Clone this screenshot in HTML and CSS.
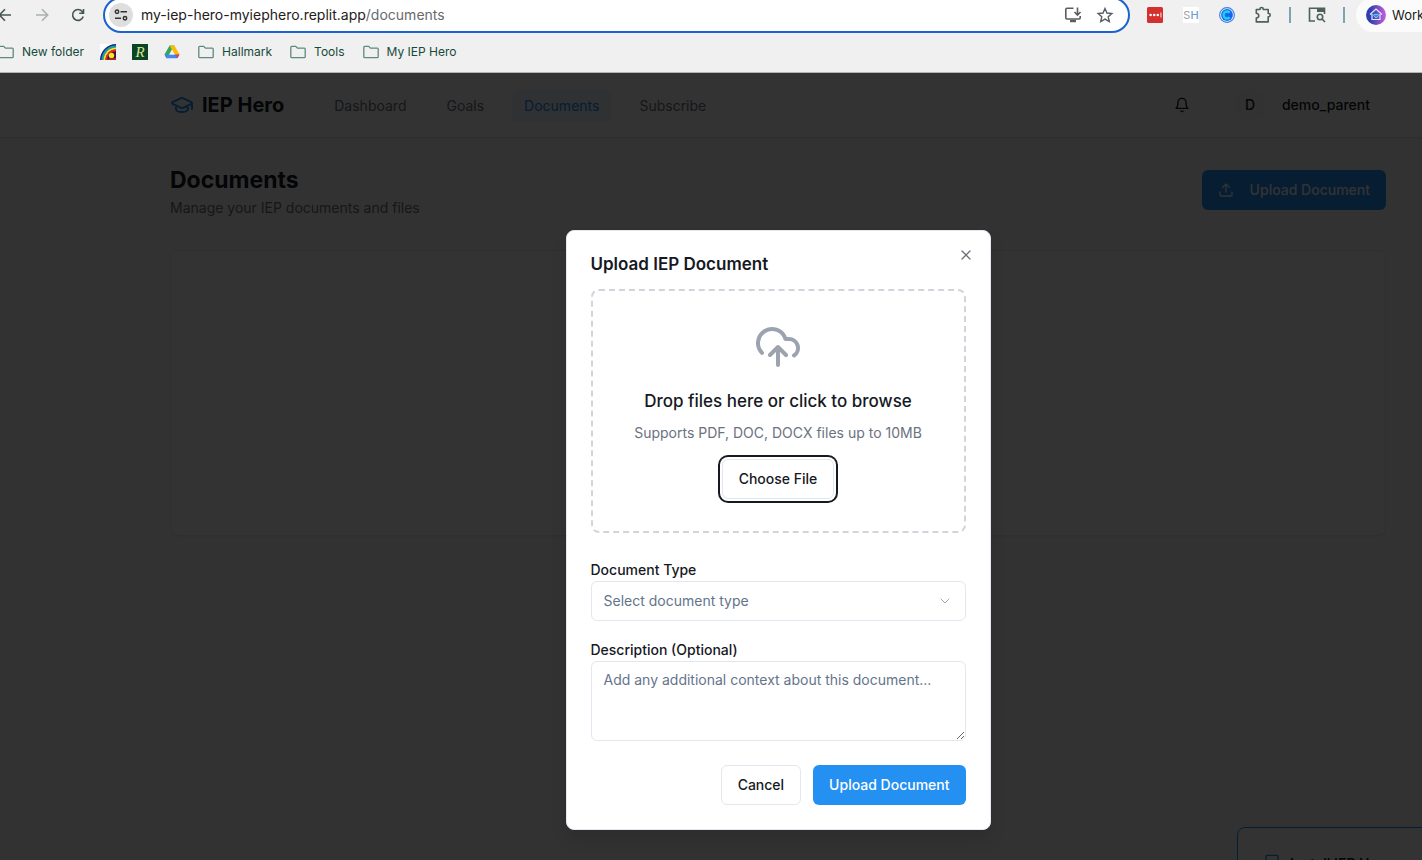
FILE: index.html
```
<!DOCTYPE html>
<html lang="en">
<head>
<meta charset="utf-8">
<meta name="viewport" content="width=device-width, initial-scale=1">
<title>IEP Hero - Documents</title>
<link rel="stylesheet" href="styles.css">
</head>
<body>
<svg class="symbols" aria-hidden="true">
  <symbol id="folder" viewBox="0 0 16 16"><path d="M.8 3.2q0-.9.9-.9h4l1.8 1.9h6.8q.9 0 .9.9v7.7q0 .9-.9.9H1.700q-.9 0-.9-.9z" fill="none" stroke="#5d8b78" stroke-width="1.3"/></symbol>
</svg>

<header class="browser">
  <div class="toolbar">
    <div class="tools tools-left">
      <button class="tool" aria-label="Back"><svg width="16" height="16" viewBox="0 0 16 16" fill="none" stroke="#47574f" stroke-width="1.6"><path d="M14 8H2.500M8 2.300L2.300 8 8 13.700"/></svg></button>
      <button class="tool" aria-label="Forward"><svg width="16" height="16" viewBox="0 0 16 16" fill="none" stroke="#aab1ae" stroke-width="1.6"><path d="M2 8h11.500M8 2.300L13.700 8 8 13.700"/></svg></button>
      <button class="tool" aria-label="Reload"><svg width="16" height="16" viewBox="0 0 16 16" fill="none" stroke="#47574f" stroke-width="1.6"><path d="M13.200 9.500A5.400 5.400 0 1 1 12.200 4.500L13.400 6M13.500 2v4.300H9.200"/></svg></button>
    </div>
    <div class="omnibox">
      <button class="site-info" aria-label="Site information"><svg width="16" height="16" viewBox="0 0 16 16" fill="none" stroke="#303233" stroke-width="1.500"><circle cx="4" cy="4.700" r="1.700"/><path d="M7.500 4.700H14M2 11.300h6"/><circle cx="12" cy="11.300" r="1.700"/></svg></button>
      <div class="address" role="textbox" aria-label="Address" contenteditable="true" spellcheck="false">my-iep-hero-myiephero.replit.app<span class="path">/documents</span></div>
      <button class="omni-action" aria-label="Install app"><svg width="18" height="18" viewBox="0 0 18 18" fill="none" stroke="#5a5d5f" stroke-width="1.600"><path d="M9.500 2.300H3q-1.200 0-1.200 1.200v8.300Q1.800 13 3 13h12q1.200 0 1.200-1.200V10M13.500 1.500v7M10.500 6l3 3 3-3"/><path d="M6 15h6" stroke-width="2.500"/></svg></button>
      <button class="omni-action" aria-label="Bookmark this page"><svg width="18" height="18" viewBox="0 0 18 18" fill="none" stroke="#5a5d5f" stroke-width="1.400"><path d="M9 2.500l2 4.500 4.900.5-3.700 3.300 1.100 4.800L9 13.100l-4.300 2.500 1.100-4.800L2.100 7.500 7 7z"/></svg></button>
    </div>
    <div class="tools tools-right">
      <button class="tool" aria-label="Password manager"><svg width="16" height="16" viewBox="0 0 16 16"><rect width="16" height="16" rx="1.500" fill="#d3302f"/><g fill="#fff"><circle cx="3.600" cy="8" r="1.300"/><circle cx="7.200" cy="8" r="1.300"/><circle cx="10.800" cy="8" r="1.300"/><path d="M13.500 5.500h.9v5h-.9z"/></g></svg></button>
      <button class="tool" aria-label="SH extension"><span class="sh">S<b>H</b></span></button>
      <button class="tool" aria-label="Calendar extension"><svg width="16" height="16" viewBox="0 0 16 16" fill="none"><circle cx="8" cy="8" r="7.400" stroke="#3b7df0" stroke-width="1.100"/><circle cx="8" cy="8" r="5.900" fill="#1765ed"/><path d="M10.700 5.700A3.500 3.500 0 1 0 10.700 10.300" stroke="#16d4f5" stroke-width="2.400"/></svg></button>
      <button class="tool" aria-label="Extensions"><svg width="18" height="18" viewBox="0 0 18 18" fill="none" stroke="#4c6158" stroke-width="1.600" stroke-linejoin="round"><path d="M2.300 3.500H6V2.800q0-1.300 1.600-1.300t1.600 1.300v.7h5v4h.7q1.300 0 1.300 1.600t-1.300 1.600h-.7v5.200H2.300v-3.900q2.500-.4 2.500-2.300T2.300 7.300z"/></svg></button>
      <span class="divider"></span>
      <button class="tool" aria-label="Tab search"><svg width="18" height="18" viewBox="0 0 18 18" fill="none" stroke="#4c6158" stroke-width="1.600"><path d="M7 15H1.500V2.300h15V8"/><path d="M9 2h8v4H9z" fill="#4c6158" stroke="none"/><circle cx="12" cy="11" r="2.700"/><path d="M14 13l3 3"/></svg></button>
      <span class="divider"></span>
    </div>
    <button class="profile"><svg width="20" height="20" viewBox="0 0 20 20" fill="none"><defs><linearGradient id="pg" x1="0" x2="1"><stop offset=".2" stop-color="#2b3fad"/><stop offset="1" stop-color="#c95fdc"/></linearGradient></defs><circle cx="10" cy="10" r="10" fill="url(#pg)"/><path d="M4 9.500L10 4l6 5.500M6 9v5.500h8V9" stroke="#e4e5ff" stroke-width="1.200"/><path d="M10 13L7.500 10.500q0-2 2.500-.8 2.500-1.200 2.500.8z" fill="#2a8de6" stroke="#5be0f5"/></svg><span>Work</span></button>
  </div>
  <nav class="bookmarks" aria-label="Bookmarks">
    <a class="folder" href="#"><svg width="16" height="16"><use href="#folder"/></svg>New folder</a>
    <a class="favicon" href="#" aria-label="Rainbow"><svg width="16" height="16" viewBox="0 0 16 16" fill="none"><path d="M0 0h16v16H0z" fill="#fff"/><path d="M0 16A16 16 0 0 1 16 0v16z" fill="#172a8c"/><g stroke-width="2"><path d="M2.500 16A13.500 13.500 0 0 1 16 2.500" stroke="#16a3a0"/><path d="M4.500 16A11.500 11.500 0 0 1 16 4.500" stroke="#f2e52b"/><path d="M6.300 16A9.700 9.700 0 0 1 16 6.300" stroke="#e42a23"/></g><path d="M7.500 16A8.500 8.500 0 0 1 16 7.500V16z" fill="#4a1034"/><circle cx="11.500" cy="11.500" r="2.700" fill="#f5e829"/><path d="M7 16l3-2h6v2z" fill="#a12c22"/></svg></a>
    <a class="favicon letter" href="#" aria-label="R bookmark">R</a>
    <a class="favicon" href="#" aria-label="Drive"><svg width="16" height="16" viewBox="0 0 16 16"><path d="M5.600 1.500h4.800L8 5.600 3.200 14.300H2.500L.5 10.500z" fill="#35a853"/><path d="M5.600 1.500h4.800l5.100 9h-4.800z" fill="#fbbc05"/><path d="M3 14.300l2.300-3.800h10.200l-2 3.800z" fill="#4285f4"/><path d="M10.700 10.500h4.800l-2 3.500z" fill="#ea4335"/><path d="M8 5.700l2.700 4.800H5.300z" fill="#f0f0f0"/><path d="M.5 10.500h4.800L3 14.300h-.5z" fill="#4285f4"/></svg></a>
    <a class="folder" href="#"><svg width="16" height="16"><use href="#folder"/></svg>Hallmark</a>
    <a class="folder" href="#"><svg width="16" height="16"><use href="#folder"/></svg>Tools</a>
    <a class="folder" href="#"><svg width="16" height="16"><use href="#folder"/></svg>My IEP Hero</a>
  </nav>
</header>

<div class="app">
  <header class="site-header">
    <a class="brand" href="#"><svg width="24" height="24" viewBox="0 0 24 24" fill="none" stroke="#2490f2" stroke-width="2" stroke-linecap="round" stroke-linejoin="round"><path d="M21.400 10.900a1 1 0 0 0 0-1.800l-8.600-3.900a2 2 0 0 0-1.700 0L2.600 9.100a1 1 0 0 0 0 1.800l8.600 3.900a2 2 0 0 0 1.700 0zM22 10v6M6 12.500V16a6 3 0 0 0 12 0v-3.500"/></svg>IEP Hero</a>
    <nav class="site-nav">
      <a href="#">Dashboard</a>
      <a href="#">Goals</a>
      <a class="active" href="#">Documents</a>
      <a href="#">Subscribe</a>
    </nav>
    <button class="bell" aria-label="Notifications"><svg width="16" height="16" viewBox="0 0 24 24" fill="none" stroke="currentColor" stroke-width="2" stroke-linecap="round" stroke-linejoin="round"><path d="M6 8a6 6 0 0 1 12 0c0 7 3 9 3 9H3s3-2 3-9M10.300 21a1.940 1.940 0 0 0 3.400 0"/></svg></button>
    <button class="user"><span class="avatar">D</span>demo_parent</button>
  </header>
  <main class="content">
    <div class="page-head">
      <div>
        <h1>Documents</h1>
        <p>Manage your IEP documents and files</p>
      </div>
      <button class="btn primary with-icon"><svg width="16" height="16" viewBox="0 0 24 24" fill="none" stroke="currentColor" stroke-width="2" stroke-linecap="round" stroke-linejoin="round"><path d="M21 15v4a2 2 0 0 1-2 2H5a2 2 0 0 1-2-2v-4M17 8l-5-5-5 5M12 3v12"/></svg>Upload Document</button>
    </div>
    <section class="documents" aria-label="Document list"></section>
  </main>

  <aside class="install">
    <svg width="16" height="16" viewBox="0 0 24 24" fill="none" stroke="#2490f2" stroke-width="2"><rect x="3" y="2" width="18" height="20" rx="2"/></svg>
    <strong>Install IEP Hero</strong>
  </aside>

  <div class="overlay">
    <form class="dialog" role="dialog" aria-labelledby="dialog-title">
      <button class="close" type="button" aria-label="Close"><svg width="16" height="16" viewBox="0 0 24 24" fill="none" stroke="#6b7078" stroke-width="2" stroke-linecap="round"><path d="M18 6L6 18M6 6l12 12"/></svg></button>
      <h2 id="dialog-title">Upload IEP Document</h2>
      <div class="dropzone">
        <svg width="48" height="48" viewBox="0 0 24 24" fill="none" stroke="#9ca3af" stroke-width="2" stroke-linecap="round" stroke-linejoin="round"><path d="M4 14.900A7 7 0 1 1 15.710 8h1.790a4.500 4.500 0 0 1 2.500 8.240M12 12v9M16 16l-4-4-4 4"/></svg>
        <p class="drop-title">Drop files here or click to browse</p>
        <p class="drop-hint">Supports PDF, DOC, DOCX files up to 10MB</p>
        <button class="btn outline focused" type="button">Choose File</button>
      </div>
      <div class="fields">
        <div class="field">
          <label for="doc-type">Document Type</label>
          <div class="select-wrap">
            <select id="doc-type"><option>Select document type</option></select>
            <svg class="chevron" width="16" height="16" viewBox="0 0 24 24" fill="none" stroke="#a2a8b1" stroke-width="1.500" stroke-linecap="round" stroke-linejoin="round"><path d="M6 9l6 6 6-6"/></svg>
          </div>
        </div>
        <div class="field">
          <label for="description">Description (Optional)</label>
          <textarea id="description" placeholder="Add any additional context about this document..."></textarea>
        </div>
      </div>
      <div class="actions">
        <button class="btn outline" type="button">Cancel</button>
        <button class="btn primary" type="button">Upload Document</button>
      </div>
    </form>
  </div>
</div>
</body>
</html>
```
FILE: styles.css
```
* { box-sizing: border-box; }

body {
  margin: 0;
  height: 100vh;
  display: flex;
  flex-direction: column;
  overflow: hidden;
  font-family: Inter, sans-serif;
  font-size: 14px;
  line-height: 20px;
  color: #16191f;
}

h1, h2, p { margin: 0; }
a { color: inherit; text-decoration: none; }
svg { display: block; flex: none; }
button, select, textarea { font: inherit; color: inherit; }
button { border: 0; padding: 0; background: none; cursor: pointer; }
.symbols { position: absolute; width: 0; height: 0; }

/* Browser frame */
.browser {
  flex: none;
  background: #f0f0f0;
  border-bottom: 1px solid #b4b4b4;
}

.toolbar {
  display: flex;
  align-items: center;
  height: 36px;
  margin-top: -3px;
}

.tools { display: flex; align-items: center; flex: none; }
.tools-left { margin-left: -12px; }
.tool { width: 36px; height: 36px; display: grid; place-items: center; }
.tools-left .tool:first-child { padding-right: 2px; }

.omnibox {
  flex: 1;
  min-width: 0;
  height: 36px;
  margin: 0 7px;
  padding: 0 14px 0 4px;
  display: flex;
  align-items: center;
  gap: 14px;
  background: #fff;
  border: 2px solid #1b62d1;
  border-radius: 18px;
}

.site-info {
  width: 24px;
  height: 24px;
  flex: none;
  display: grid;
  place-items: center;
  border-radius: 50%;
  background: #dedede;
}

.address {
  flex: 1;
  min-width: 0;
  margin-left: -6px;
  font-size: 14px;
  white-space: nowrap;
  overflow: hidden;
  color: #1e2021;
}
.address .path { color: #686b6e; }

.sh {
  width: 16px;
  height: 16px;
  background: #fff;
  font-size: 11px;
  line-height: 16px;
  text-align: center;
  color: #9a9fa6;
}
.sh b { font-weight: 500; color: #70a0cf; }

.divider { width: 2px; height: 16px; margin: 0 8px; background: #7da2b0; }

.profile {
  flex: none;
  width: 66px;
  height: 34px;
  margin-left: 3px;
  padding-left: 10px;
  display: flex;
  align-items: center;
  gap: 6px;
  overflow: hidden;
  border-radius: 17px 0 0 17px;
  background: #fbfbfb;
  font-size: 13px;
}

.bookmarks {
  display: flex;
  align-items: center;
  gap: 16px;
  height: 39px;
  margin-left: -4px;
  padding-bottom: 2px;
  font-size: 12px;
  color: #174a38;
}
.folder { display: flex; align-items: center; gap: 8px; margin-left: 2px; }
.favicon { width: 16px; height: 16px; flex: none; }
.letter {
  background: #0b4426;
  color: #d8e58c;
  font: italic 400 15px/16px "Liberation Serif", serif;
  text-align: center;
}

/* Application */
.app {
  position: relative;
  flex: 1;
  min-height: 0;
  overflow: hidden;
  background: #fafafa;
}

.site-header {
  display: flex;
  align-items: center;
  height: 65px;
  padding: 0 52px 0 170px;
  background: #fff;
  border-bottom: 1px solid #e5e7eb;
  box-shadow: 0 1px 2px rgba(0, 0, 0, .06);
  font-weight: 500;
}

.brand {
  display: flex;
  align-items: center;
  gap: 8px;
  margin-right: 38px;
  font-size: 20px;
  line-height: 28px;
  font-weight: 700;
}

.site-nav { display: flex; gap: 16px; margin-right: auto; padding-top: 2px; font-weight: 400; color: #6b7280; }
.site-nav a { padding: 6px 12px; border-radius: 6px; }
.site-nav .active { background: #eaf4fe; color: #2490f2; }

.bell { width: 40px; height: 40px; display: grid; place-items: center; margin-right: 32px; }
.user { display: flex; align-items: center; gap: 16px; font-weight: 500; }
.avatar {
  width: 32px;
  height: 32px;
  border-radius: 50%;
  background: #f8fafc;
  line-height: 32px;
}

.content { padding: 24px 36px 24px 170px; }
.page-head { display: flex; justify-content: space-between; align-items: center; }
.page-head h1 { font-size: 23px; line-height: 36px; font-weight: 700; }
.page-head p { color: #6b7280; }
.documents {
  height: 286px;
  margin-top: 32px;
  background: #fcfcfc;
  border: 1px solid #e2e8f0;
  border-radius: 8px;
  box-shadow: 0 1px 2px rgba(0, 0, 0, .05);
}

.install {
  position: absolute;
  right: -135px;
  bottom: -47px;
  width: 320px;
  height: 80px;
  padding: 26px 26px;
  display: flex;
  align-items: flex-start;
  gap: 10px;
  background: #fff;
  border: 1px solid #2490f2;
  border-radius: 8px;
}
.install strong { font-weight: 600; }

.overlay {
  position: absolute;
  inset: 0;
  display: flex;
  justify-content: center;
  align-items: flex-start;
  padding: 157px 0 0 134px;
  background: rgba(0, 0, 0, .8);
}

/* Controls */
.btn {
  height: 40px;
  padding: 0 16px;
  border-radius: 6px;
  font-weight: 500;
  white-space: nowrap;
}
.primary { background: #2490f2; color: #fff; }
.outline { background: #fff; border: 1px solid #e2e8f0; }
.with-icon { display: flex; align-items: center; gap: 16px; }
.focused { box-shadow: 0 0 0 2px #fff, 0 0 0 4px #16191f; }

/* Upload dialog */
.dialog {
  position: relative;
  width: 425px;
  padding: 24px;
  background: #fff;
  border: 1px solid #e2e8f0;
  border-radius: 8px;
  box-shadow: 0 10px 15px rgba(0, 0, 0, .1);
}
.dialog h2 { font-size: 17px; line-height: 18px; font-weight: 600; }
.close { position: absolute; top: 16px; right: 16px; }

.dropzone {
  margin-top: 16px;
  padding: 32px;
  display: flex;
  flex-direction: column;
  align-items: center;
  border: 2px dashed #d1d5db;
  border-radius: 8px;
}
.drop-title { margin: 16px 0 8px; font-size: 17px; line-height: 28px; font-weight: 500; }
.drop-hint { margin-bottom: 16px; color: #6b7280; }

.fields { display: grid; gap: 16px; margin: 24px 0; }
.field { display: grid; }
.field label { padding-top: 2px; line-height: 22px; font-weight: 500; }
.select-wrap { position: relative; }
select, textarea {
  display: block;
  width: 100%;
  background: #fff;
  border: 1px solid #e2e8f0;
  border-radius: 6px;
  color: #64748b;
}
select { height: 40px; padding: 0 12px; appearance: none; }
.chevron { position: absolute; right: 13px; top: 12px; pointer-events: none; }
textarea { height: 80px; padding: 8px 12px; resize: vertical; }
textarea::placeholder { color: #64748b; }

.actions { display: flex; justify-content: flex-end; gap: 12px; }
```
